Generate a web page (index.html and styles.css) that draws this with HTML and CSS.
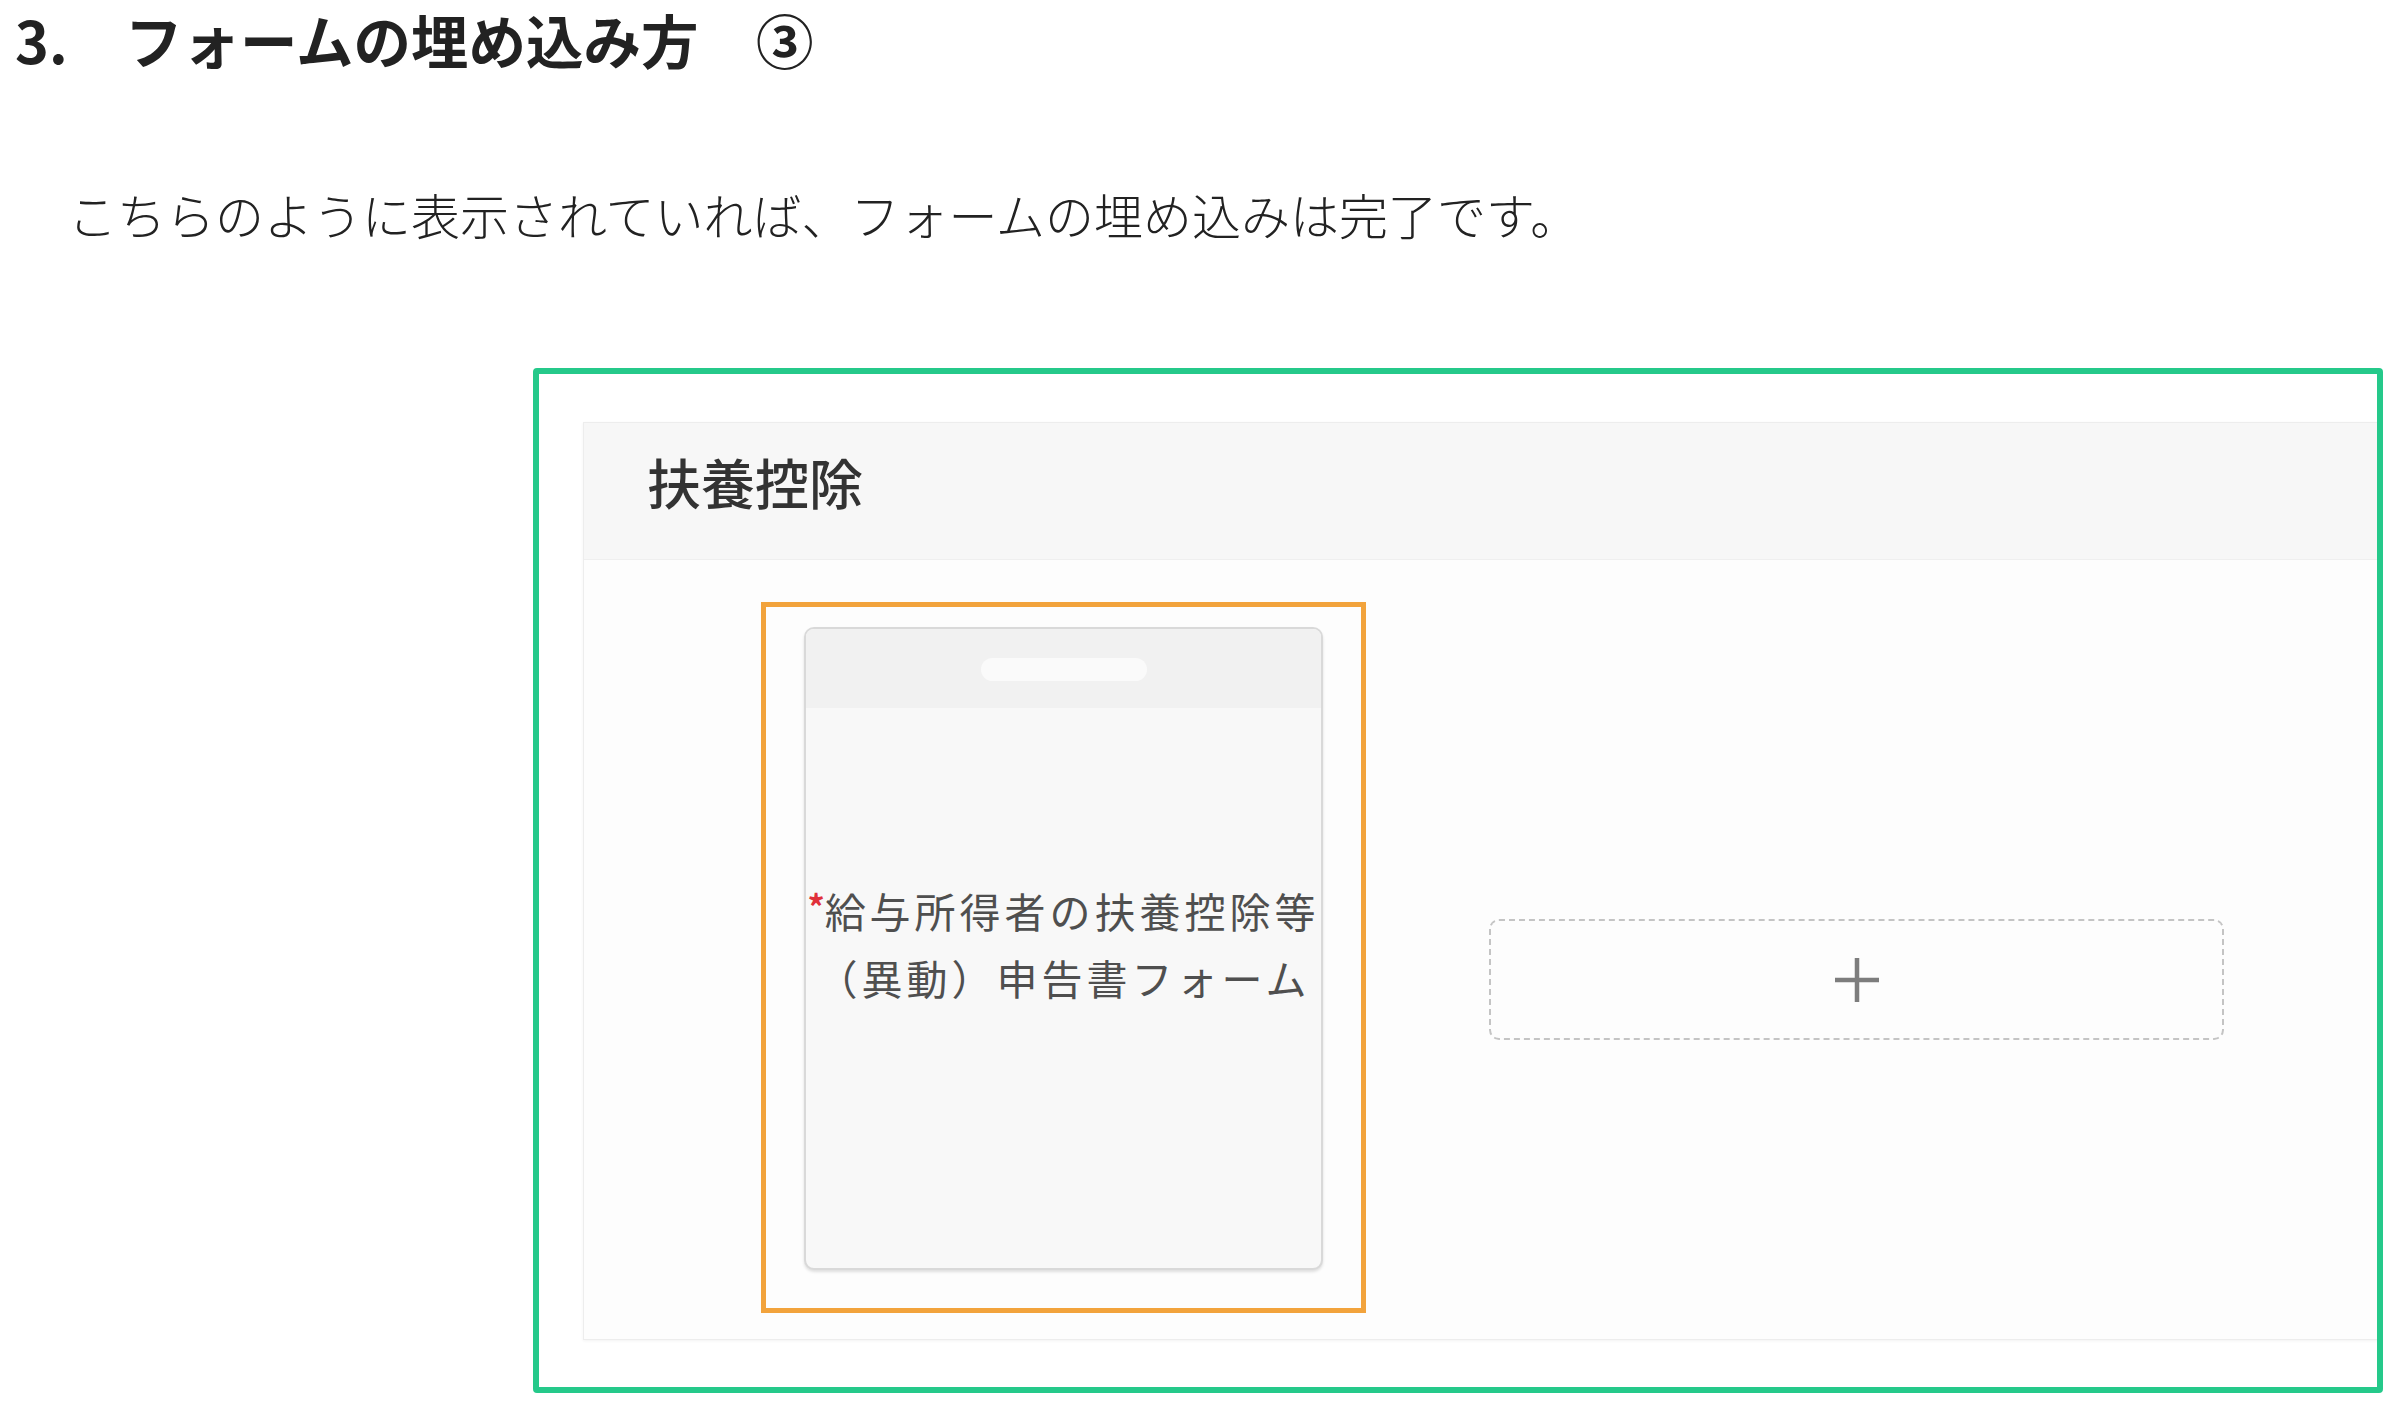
FILE: index.html
```html
<!DOCTYPE html>
<html lang="ja">
<head>
  <meta charset="UTF-8">
  <title>フォームの埋め込み方</title>
  <link rel="stylesheet" href="styles.css">
</head>
<body>
  <h1 class="title">3.　フォームの埋め込み方　③</h1>
  <p class="lead">こちらのように表示されていれば、フォームの埋め込みは完了です。</p>

  <div class="shot">
    <div class="panel">
      <div class="panel-head">扶養控除</div>
      <div class="panel-body">
        <div class="picked">
          <div class="form-card">
            <div class="form-card-top"><span class="pill"></span></div>
            <div class="form-card-body">
              <p><span class="req">*</span>給与所得者の扶養控除等<br>（異動）申告書フォーム</p>
            </div>
          </div>
        </div>
        <div class="add-box">
          <svg width="48" height="48" viewBox="0 0 48 48">
            <path d="M24 2 V46 M2 24 H46" stroke="#7d7d7d" stroke-width="4.5" fill="none"/>
          </svg>
        </div>
      </div>
    </div>
  </div>
</body>
</html>
```

FILE: styles.css
```css
/* General styles */
* {
  margin: 0;
  padding: 0;
  box-sizing: border-box;
}
body {
  font-family: "Noto Sans CJK JP", "Noto Sans", sans-serif;
  background-color: #fff;
  color: #333;
}
.title {
  font-size: 57.5px;
  font-weight: 700;
  line-height: 78px;
  padding-left: 15px;
  color: #222;
}
.lead {
  margin-top: 100px;
  padding-left: 68px;
  font-size: 49px;
  font-weight: 300;
  line-height: 72px;
  color: #222;
}

/* screenshot frame */
.shot {
  margin: 118px 0 0 533px;
  width: 1850px;
  height: 1025px;
  border: 6px solid #25c98a;
  border-radius: 4px;
  padding: 48px 0 0 44px;
  overflow: hidden;
}
.panel {
  margin-right: -20px;
  border: 1px solid #ededed;
  box-shadow: 0 1px 3px rgba(0, 0, 0, 0.05);
  background-color: #fdfdfd;
}
.panel-head {
  height: 137px;
  background-color: #f7f7f7;
  border-bottom: 1px solid #efefef;
  padding-left: 63px;
  font-size: 54px;
  font-weight: 500;
  line-height: 118px;
  color: #333;
}
.panel-body {
  display: flex;
  align-items: flex-start;
  padding: 42px 0 26px 177px;
}
.picked {
  width: 605px;
  height: 711px;
  border: 5px solid #f2a33c;
  padding: 20px 38px 38px 38px;
}
.form-card {
  height: 100%;
  display: flex;
  flex-direction: column;
  background-color: #f8f8f8;
  border: 2px solid #d9d9d9;
  border-radius: 10px;
  box-shadow: 0 2px 3px rgba(0, 0, 0, 0.12);
  overflow: hidden;
}
.form-card-top {
  height: 79px;
  background-color: #f1f1f1;
  display: flex;
  justify-content: center;
  padding-top: 29px;
}
.pill {
  width: 166px;
  height: 23px;
  border-radius: 12px;
  background-color: #fafafa;
}
.form-card-body {
  flex: 1;
  display: flex;
  align-items: center;
  justify-content: center;
  padding-bottom: 93px;
}
.form-card-body p {
  font-size: 41px;
  letter-spacing: 4px;
  line-height: 67px;
  text-align: center;
  color: #4f4f4f;
}
.req {
  color: #e0303a;
  font-size: 34px;
  font-weight: 700;
  vertical-align: 8px;
  letter-spacing: 0;
}
.add-box {
  margin: 317px 0 0 123px;
  width: 735px;
  height: 121px;
  border: 2px dashed #c4c4c4;
  border-radius: 10px;
  display: flex;
  align-items: center;
  justify-content: center;
}
```
